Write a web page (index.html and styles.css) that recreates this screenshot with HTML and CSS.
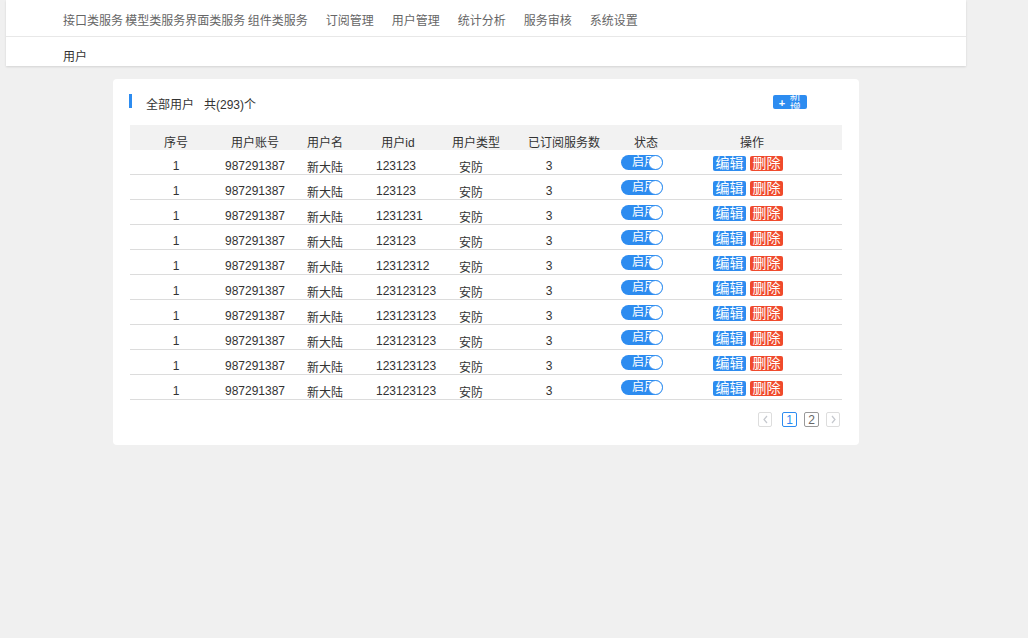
FILE: index.html
```html
<!DOCTYPE html>
<html>
  <head>
    <title>用户</title>
    <link rel="stylesheet" href="styles.css">
  </head>
  <body>
    <div class="header">
      <div class="nav">
        <span class="nav-group">接口类服务 模型类服务界面类服务 组件类服务</span>
        <span class="nav-item">订阅管理</span>
        <span class="nav-item">用户管理</span>
        <span class="nav-item">统计分析</span>
        <span class="nav-item">服务审核</span>
        <span class="nav-item">系统设置</span>
      </div>
      <div class="crumb">用户</div>
    </div>

    <div class="card">
      <div class="card-title">
        <div class="title-left">
          <span class="bar"></span>
          <span>全部用户&nbsp;&nbsp;&nbsp;共(293)个</span>
        </div>
        <button class="add-btn"><span class="plus">+</span><span class="add-word">新增</span></button>
      </div>

      <div class="table">
        <div class="row head">
          <div class="cell">序号</div>
          <div class="cell">用户账号</div>
          <div class="cell">用户名</div>
          <div class="cell">用户id</div>
          <div class="cell">用户类型</div>
          <div class="cell">已订阅服务数</div>
          <div class="cell status">状态</div>
          <div class="cell">操作</div>
        </div>
        <div id="rows"></div>
      </div>

      <div class="pager">
        <span class="page arrow"><svg width="7" height="9" viewBox="0 0 7 9"><polyline points="5,1 2,4.5 5,8" fill="none" stroke="#c5c8ce" stroke-width="1.2"/></svg></span>
        <span class="page current">1</span>
        <span class="page">2</span>
        <span class="page arrow"><svg width="7" height="9" viewBox="0 0 7 9"><polyline points="2,1 5,4.5 2,8" fill="none" stroke="#c5c8ce" stroke-width="1.2"/></svg></span>
      </div>
    </div>

    <script src="app.js"></script>
  </body>
</html>
```

FILE: styles.css
```css
* {
  margin: 0;
  padding: 0;
  box-sizing: border-box;
}

body {
  font-family: "Liberation Sans", "Noto Sans CJK SC", sans-serif;
  font-size: 12px;
  color: #333;
  background: #f0f0f0;
  width: 1028px;
  height: 638px;
  overflow: hidden;
}

.header {
  width: 960px;
  margin-left: 6px;
  background: #fff;
  box-shadow: 0 1px 2px rgba(0, 0, 0, 0.12);
}

.nav {
  height: 37px;
  display: flex;
  align-items: center;
  padding-left: 57px;
  padding-top: 3px;
  color: #666;
  border-bottom: 1px solid #e8e8e8;
}

.nav-group {
  word-spacing: -1px;
}

.nav-item {
  margin-left: 18px;
}

.crumb {
  height: 29px;
  padding-left: 57px;
  padding-top: 13px;
  line-height: 14px;
}

.card {
  width: 746px;
  height: 366px;
  margin: 13px 0 0 113px;
  padding: 15px 17px 0 17px;
  background: #fff;
  border-radius: 4px;
}

.card-title {
  height: 16px;
  display: flex;
  align-items: center;
  justify-content: space-between;
}

.title-left {
  display: flex;
  align-items: center;
  margin-left: -1px;
  padding-top: 2px;
}

.bar {
  width: 3px;
  height: 14px;
  background: #2d8cf0;
  margin-right: 14px;
  margin-top: -4px;
}

.add-btn {
  width: 34px;
  height: 14px;
  margin-right: 35px;
  background: #2d8cf0;
  border: none;
  border-radius: 2px;
  color: #fff;
  font-family: inherit;
  display: flex;
  align-items: center;
  justify-content: center;
  overflow: hidden;
}

.plus {
  font-size: 11px;
  font-weight: bold;
  margin-right: 4px;
  margin-top: 2px;
}

.add-word {
  width: 12px;
  font-size: 11px;
  line-height: 12px;
  flex-shrink: 0;
}

.table {
  margin-top: 15px;
}

.row {
  display: grid;
  grid-template-columns: 92px 66px 74px 72px 84px 92px 64px 156px 12px;
  height: 25px;
  border-bottom: 1px solid #dcdcdc;
}

.row.head {
  background: #f2f2f2;
  border-bottom: none;
}

.cell {
  text-align: center;
  line-height: 16px;
  padding-top: 8px;
  white-space: nowrap;
}

.head .cell {
  padding-top: 10px;
}

.head .cell.status {
  padding-left: 8px;
}

.cell.cn {
  padding-top: 10px;
}

.cell.id {
  text-align: left;
  padding-left: 14px;
}

.cell.type {
  padding-right: 10px;
}

.cell.count {
  padding-right: 30px;
}

.cell.ctrl {
  padding-top: 0;
  display: flex;
  align-items: center;
  justify-content: center;
}

.cell.ops {
  padding-right: 8px;
  gap: 4px;
}

.switch {
  position: relative;
  width: 42px;
  height: 15px;
  border-radius: 8px;
  background: #2d8cf0;
  color: #fff;
  line-height: 15px;
  padding-left: 11px;
  text-align: left;
  overflow: hidden;
  margin-bottom: 1px;
}

.knob {
  position: absolute;
  right: 0;
  top: 0;
  width: 15px;
  height: 15px;
  border-radius: 50%;
  background: #fff;
  border: 1px solid #2d8cf0;
}

.op {
  width: 33px;
  height: 15px;
  line-height: 15px;
  font-size: 14px;
  text-align: center;
  color: #fff;
  border-radius: 2px;
  background: #2d8cf0;
  overflow: hidden;
}

.op.del {
  background: #f04a2c;
}

.pager {
  display: flex;
  justify-content: flex-end;
  margin-top: 12px;
  margin-right: 2px;
}

.page {
  width: 15px;
  height: 15px;
  border: 1px solid #999;
  border-radius: 2px;
  margin-left: 7px;
  display: flex;
  align-items: center;
  justify-content: center;
  font-size: 12px;
  color: #666;
}

.page.arrow {
  width: 14px;
  border-color: #ddd;
}

.page.current {
  border-color: #2d8cf0;
  color: #2d8cf0;
  margin-left: 10px;
}
```

FILE: app.js
```js
var ids = ['123123', '123123', '1231231', '123123', '12312312', '123123123', '123123123', '123123123', '123123123', '123123123'];

var html = '';
ids.forEach(function (id) {
  html += '<div class="row">' +
    '<div class="cell">1</div>' +
    '<div class="cell">987291387</div>' +
    '<div class="cell cn">新大陆</div>' +
    '<div class="cell id">' + id + '</div>' +
    '<div class="cell cn type">安防</div>' +
    '<div class="cell count">3</div>' +
    '<div class="cell ctrl"><span class="switch">启用<span class="knob"></span></span></div>' +
    '<div class="cell ctrl ops"><span class="op">编辑</span><span class="op del">删除</span></div>' +
    '</div>';
});

document.getElementById('rows').innerHTML = html;
```
